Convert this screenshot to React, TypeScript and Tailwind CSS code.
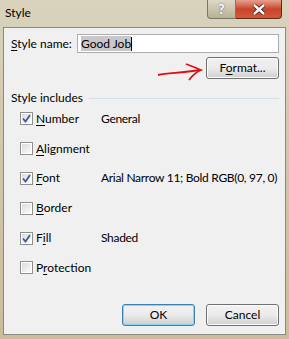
import React from 'react'

const ROWS: { label: string; key: number; value: string; checked: boolean }[] = [
  { label: 'Number', key: 0, value: 'General', checked: true },
  { label: 'Alignment', key: 0, value: '', checked: false },
  { label: 'Font', key: 0, value: 'Arial Narrow 11; Bold RGB(0, 97, 0)', checked: true },
  { label: 'Border', key: 0, value: '', checked: false },
  { label: 'Fill', key: 1, value: 'Shaded', checked: true },
  { label: 'Protection', key: 1, value: '', checked: false },
]

function Mnemonic({ text, at }: { text: string; at: number }) {
  return (
    <span>
      {text.slice(0, at)}
      <span className="underline underline-offset-2">{text[at]}</span>
      {text.slice(at + 1)}
    </span>
  )
}

function CheckBox({ checked }: { checked: boolean }) {
  return (
    <div className="w-[13px] h-[13px] border border-[#8f8f8f] bg-white p-[1px] shrink-0">
      <div className="w-full h-full bg-gradient-to-br from-[#dcdcdc] to-[#fbfbfb] flex items-center justify-center">
        {checked && (
          <svg width="9" height="9" viewBox="0 0 9 9">
            <path d="M1 4.5 L3.5 7.5 L8 1" fill="none" stroke="#3d5a9c" strokeWidth="1.8" />
          </svg>
        )}
      </div>
    </div>
  )
}

function Btn({ children, focus }: { children: React.ReactNode; focus?: boolean }) {
  return (
    <div
      className={`w-[73px] h-[22px] rounded-[3px] border flex items-center justify-center bg-gradient-to-b from-[#f2f2f2] via-[#ebebeb] to-[#cfcfcf] ${
        focus ? 'border-[#3c7fb1] shadow-[inset_0_0_0_1px_#8fd3f2]' : 'border-[#707070] shadow-[inset_0_0_0_1px_#fcfcfc]'
      }`}
    >
      {children}
    </div>
  )
}

export default function App() {
  return (
    <div
      className="w-[289px] h-[339px] flex flex-col bg-gradient-to-b from-[#d9d2bd] via-[#cfc6a9] to-[#c9bd9b] text-[12px] text-black whitespace-nowrap"
      style={{ fontFamily: 'Lato, "Noto Sans", sans-serif' }}
    >
      {/* title bar */}
      <div className="h-[27px] flex items-start justify-between shrink-0">
        <span className="pl-[5px] pt-[6px] text-[12px] leading-[14px] text-black">Style</span>
        <div className="flex mr-[7px]">
          <div className="w-[29px] h-[19px] rounded-bl-[4px] border border-[#7c7765] border-t-0 bg-gradient-to-b from-[#ded8c6] to-[#b9b196] flex items-center justify-center text-white font-bold text-[13px] leading-none [text-shadow:0_0_2px_#555]">
            ?
          </div>
          <div className="w-[46px] h-[19px] rounded-br-[4px] border border-[#5e2a1e] border-t-0 border-l-0 bg-gradient-to-b from-[#e5a08d] via-[#c8452b] to-[#d2583b] flex items-center justify-center">
            <svg width="14" height="11" viewBox="0 0 14 11">
              <path d="M2 1 L12 10 M12 1 L2 10" stroke="#3b1a12" strokeWidth="4" />
              <path d="M2 1 L12 10 M12 1 L2 10" stroke="#ffffff" strokeWidth="2.4" />
            </svg>
          </div>
        </div>
      </div>

      {/* client */}
      <div className="relative flex-1 mx-[3px] mb-[4px] border border-[#8c8a7e] bg-[#f0f0f0] flex flex-col px-[6px]">
        <div className="flex items-center mt-[6px] h-[19px]">
          <span className="w-[67px] pl-[1px] shrink-0">
            <Mnemonic text="Style name:" at={0} />
          </span>
          <div className="flex-1 h-[19px] border border-[#abadb3] bg-white flex items-center pl-[3px]">
            <span className="bg-[#c8c8c8] leading-[15px]">Good Job</span>
            <span className="w-[1px] h-[14px] bg-black" />
          </div>
        </div>

        <div className="flex justify-end mt-[4px]">
          <Btn>
            <Mnemonic text="Format..." at={1} />
          </Btn>
        </div>

        {/* red arrow annotation */}
        <svg className="absolute left-[152px] top-[34px]" width="50" height="20" viewBox="0 0 50 20">
          <path d="M2 13 C12 11 24 11 44 8" fill="none" stroke="#e01010" strokeWidth="1.8" />
          <path d="M30 2 C36 4 40 6 45 8 C40 10 36 14 33 18" fill="none" stroke="#e01010" strokeWidth="1.8" />
        </svg>

        <div className="flex items-center mt-[10px]">
          <span className="mr-[6px] pl-[1px]">Style includes</span>
          <div className="flex-1 h-0 border-t border-[#d5dfe5]" />
        </div>

        <div className="flex flex-col pl-[10px] mt-[-3px]">
          {ROWS.map((r) => (
            <div key={r.label} className="h-[29.8px] flex items-center">
              <CheckBox checked={r.checked} />
              <span className="w-[68px] pl-[3px] shrink-0">
                <Mnemonic text={r.label} at={r.key} />
              </span>
              <span className="tracking-[-0.3px]">{r.value}</span>
            </div>
          ))}
        </div>

        <div className="flex justify-end gap-[11px] mt-[21px]">
          <Btn focus>OK</Btn>
          <Btn>Cancel</Btn>
        </div>
      </div>
    </div>
  )
}
